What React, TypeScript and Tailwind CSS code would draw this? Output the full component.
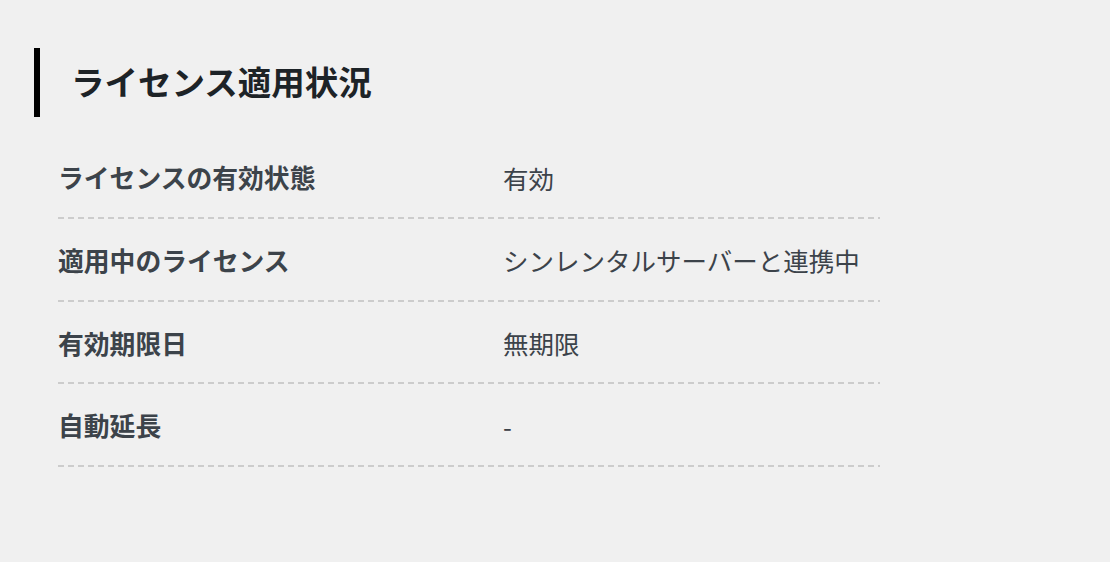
const rows = [
  { label: "ライセンスの有効状態", value: "有効" },
  { label: "適用中のライセンス", value: "シンレンタルサーバーと連携中" },
  { label: "有効期限日", value: "無期限" },
  { label: "自動延長", value: "-" },
];

export default function App() {
  return (
    <div className="h-[562px] w-[1110px] bg-[#f0f0f0] pt-[48px] pl-[34px] font-['Noto_Sans_CJK_JP','Noto_Sans',sans-serif]">
      {/* Section heading */}
      <div className="flex h-[69px] items-center border-l-[6px] border-black pb-[4px] pl-[31px]">
        <h2 className="text-[33.5px] font-bold leading-none text-[#1d2327]">
          ライセンス適用状況
        </h2>
      </div>
      {/* Status table */}
      <div className="ml-[24px] mt-[19.33px] w-[822px]">
        {rows.map((row) => (
          <div key={row.label}>
            <div className="flex h-[80.67px] items-center pt-[2px] text-[#3c434a]">
              <div className="w-[445px] text-[25.8px] font-bold">{row.label}</div>
              <div className="text-[25.5px]">{row.value}</div>
            </div>
            <div className="h-[2px] bg-[repeating-linear-gradient(90deg,#cccccc_0_6px,transparent_6px_10px)]" />
          </div>
        ))}
      </div>
    </div>
  );
}
